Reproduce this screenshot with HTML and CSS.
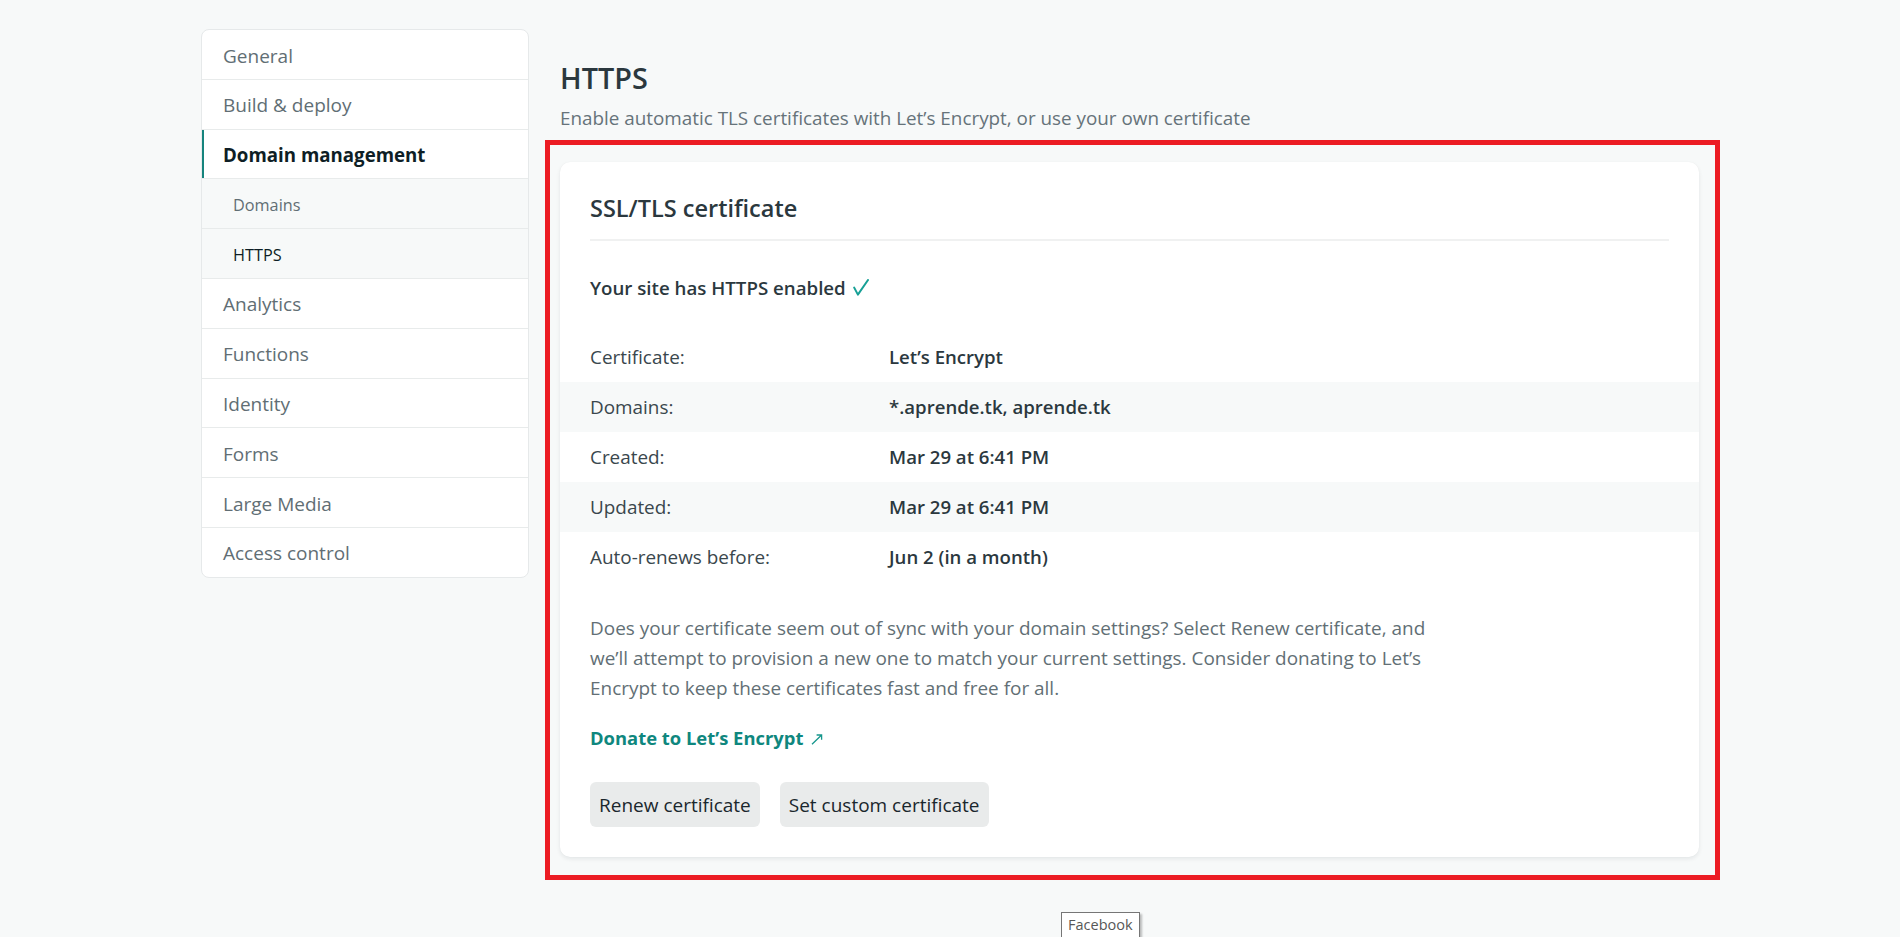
FILE: index.html
```html
<!DOCTYPE html>
<html lang="en">
<head>
<meta charset="utf-8">
<title>Domain management · HTTPS</title>
<link rel="stylesheet" href="styles.css">
</head>
<body>
<div class="page">
  <nav class="sidenav">
    <a class="nav-item" href="#">General</a>
    <a class="nav-item" href="#">Build &amp; deploy</a>
    <a class="nav-item active" href="#">Domain management</a>
    <a class="nav-item sub" href="#">Domains</a>
    <a class="nav-item sub current" href="#">HTTPS</a>
    <a class="nav-item" href="#">Analytics</a>
    <a class="nav-item" href="#">Functions</a>
    <a class="nav-item" href="#">Identity</a>
    <a class="nav-item" href="#">Forms</a>
    <a class="nav-item" href="#">Large Media</a>
    <a class="nav-item last" href="#">Access control</a>
  </nav>
  <main class="main">
    <h1 class="page-title">HTTPS</h1>
    <p class="page-sub">Enable automatic TLS certificates with Let’s Encrypt, or use your own certificate</p>
    <div class="highlight">
      <section class="card">
        <h2 class="card-title">SSL/TLS certificate</h2>
        <p class="status">Your site has HTTPS enabled <svg class="check" width="16" height="17" viewBox="0 0 16 17" aria-hidden="true"><path d="M1.2 8.6 L4.9 15.6 L15 1" fill="none" stroke="#17a096" stroke-width="2" stroke-linecap="round" stroke-linejoin="round"/></svg></p>
        <dl class="details">
          <div class="row"><dt>Certificate:</dt><dd>Let’s Encrypt</dd></div>
          <div class="row alt"><dt>Domains:</dt><dd>*.aprende.tk, aprende.tk</dd></div>
          <div class="row"><dt>Created:</dt><dd>Mar 29 at 6:41 PM</dd></div>
          <div class="row alt"><dt>Updated:</dt><dd>Mar 29 at 6:41 PM</dd></div>
          <div class="row"><dt>Auto-renews before:</dt><dd>Jun 2 (in a month)</dd></div>
        </dl>
        <p class="note">Does your certificate seem out of sync with your domain settings? Select Renew certificate, and we’ll attempt to provision a new one to match your current settings. Consider donating to Let’s Encrypt to keep these certificates fast and free for all.</p>
        <p class="donate-line"><a class="donate" href="#">Donate to Let’s Encrypt <svg class="ext" width="12" height="11" viewBox="0 0 12 11" aria-hidden="true"><path d="M1 10.2 L10.6 1 M5.6 1 L10.6 1 L10.6 5.8" fill="none" stroke="#17978d" stroke-width="1.3"/></svg></a></p>
        <div class="actions">
          <button class="btn" type="button">Renew certificate</button>
          <button class="btn" type="button">Set custom certificate</button>
        </div>
      </section>
    </div>
  </main>
</div>
<div class="tooltip">Facebook</div>
</body>
</html>
```
FILE: styles.css
```css
html, body {
  margin: 0;
  height: 937px;
  overflow: hidden;
}
body {
  background: #f7f9f9;
  font-family: "Open Sans", "Noto Sans", sans-serif;
  color: #2e3b41;
  position: relative;
}
.page {
  width: 1498px;
  margin: 0 auto;
  padding-top: 29px;
  display: flex;
  gap: 31px;
  align-items: flex-start;
}

/* Sidebar */
.sidenav {
  width: 328px;
  flex: none;
  box-sizing: border-box;
  background: #fff;
  border: 1px solid #e6e9ea;
  border-radius: 8px;
  overflow: hidden;
  display: flex;
  flex-direction: column;
}
.nav-item {
  display: block;
  height: 46.3px;
  line-height: 46.3px;
  padding: 2.5px 0 0 21px;
  border-bottom: 1px solid #e8ebeb;
  font-size: 19px;
  color: #616e74;
  text-decoration: none;
}
.nav-item.last { border-bottom: 0; }
.nav-item.active {
  font-weight: 700;
  font-size: 18.7px;
  color: #0e1e25;
  box-shadow: inset 2px 0 0 #15847d;
}
.nav-item.sub {
  background: #f7f9f9;
  font-size: 16.25px;
  padding-left: 31px;
}
.nav-item.current { color: #0e1e25; }

/* Main */
.main {
  flex: 1;
  min-width: 0;
  padding-top: 31px;
}
.page-title {
  margin: 0 0 8px;
  font-size: 28.8px;
  line-height: 36px;
  font-weight: 600;
  color: #2b383e;
}
.page-sub {
  margin: 0 0 30px;
  font-size: 18.85px;
  line-height: 28px;
  color: #66737a;
}
.highlight {
  position: relative;
}
.highlight::after {
  content: "";
  position: absolute;
  left: -15px;
  top: -22px;
  right: -21px;
  bottom: -23px;
  border: 5px solid #ec1c24;
  pointer-events: none;
}
.card {
  background: #fff;
  border-radius: 10px;
  box-shadow: 0 2px 4px rgba(14, 30, 37, 0.08), 0 0 1px rgba(14, 30, 37, 0.06);
  padding: 30px;
}
.card-title {
  margin: 0;
  padding-bottom: 15px;
  border-bottom: 2px solid #f0f1f1;
  font-size: 23.5px;
  line-height: 32px;
  font-weight: 600;
  color: #2b383e;
}
.status {
  margin: 33px 0 30px;
  font-size: 18.7px;
  line-height: 28px;
  font-weight: 600;
  color: #2b383e;
}
.check {
  display: inline-block;
  vertical-align: -1px;
  margin-left: 2px;
}
.details {
  margin: 0 -30px;
}
.row {
  display: flex;
  height: 50px;
  line-height: 50px;
  padding: 0 30px;
  font-size: 18.9px;
}
.row.alt { background: #f7f9f9; }
.row dt {
  width: 299px;
  flex: none;
  color: #3a474d;
}
.row dd {
  margin: 0;
  font-weight: 600;
  font-size: 18.6px;
  color: #2b383e;
}
.note {
  margin: 31px 0 21px;
  max-width: 850px;
  font-size: 18.95px;
  line-height: 30px;
  color: #626f75;
}
.donate-line {
  margin: 0;
  font-size: 18.4px;
  line-height: 28px;
}
.donate {
  font-weight: 700;
  color: #0f877e;
  text-decoration: none;
}
.ext {
  display: inline-block;
  margin-left: 3px;
  vertical-align: 0;
}
.actions {
  display: flex;
  gap: 20px;
  margin-top: 30px;
}
.btn {
  height: 45px;
  padding: 1px 9px 0;
  border: 0;
  border-radius: 6px;
  background: #e9ebeb;
  font-family: inherit;
  font-size: 19px;
  line-height: 44px;
  color: #1a272d;
}

/* native-looking tooltip */
.tooltip {
  position: absolute;
  left: 1061px;
  top: 912px;
  padding: 2px 6px 4px;
  background: #fff;
  border: 1px solid #767676;
  box-shadow: 2px 2px 2px rgba(0, 0, 0, 0.25);
  font-size: 14.5px;
  line-height: 20px;
  color: #575757;
}
```
